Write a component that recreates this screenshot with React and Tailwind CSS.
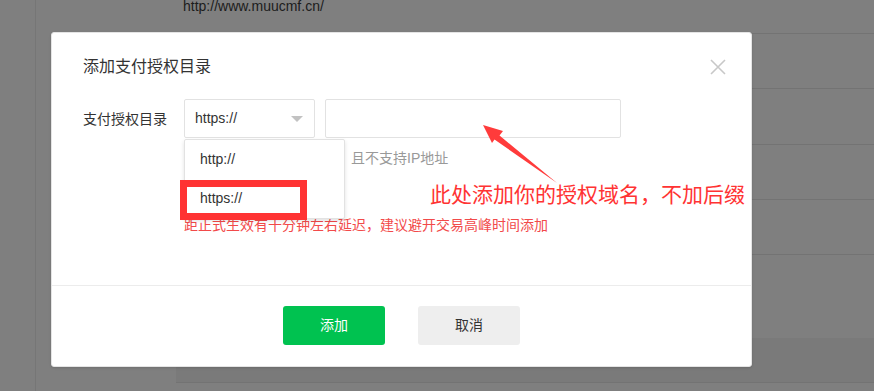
import React, { useState } from 'react';

const font = { fontFamily: '"Liberation Sans", "Noto Sans CJK SC", sans-serif' };

const Arrow = () => (
  // red annotation arrow pointing at the domain input
  <svg className="absolute left-0 top-0 z-20 pointer-events-none" width="874" height="391">
    <polygon
      points="483,125 503,131 499.5,135.5 557,183 494.5,139.5 492,143"
      fill="#ff3b3b"
    />
  </svg>
);

const App = () => {
  const [protocol, setProtocol] = useState('https://');
  const [open, setOpen] = useState(true);

  return (
    <div className="relative w-[874px] h-[391px] overflow-hidden bg-[#7f7f7f]" style={font}>
      {/* page behind the mask */}
      <div className="flex h-full">
        <div className="w-[36px] border-r border-[#767676] shrink-0" />
        <div className="flex-1 flex flex-col pl-[140px]">
          <div className="h-[34px] border-b border-[#737373] text-[14px] leading-[12px] text-[#1c1c1c] pl-[7px]">
            http://www.muucmf.cn/
          </div>
          <div className="h-[55px] border-b border-[#737373]" />
          <div className="h-[56px] border-b border-[#737373]" />
          <div className="h-[55px] border-b border-[#737373]" />
          <div className="h-[55px] border-b border-[#737373]" />
          <div className="h-[83px]" />
          <div className="h-[45px] bg-[#7a7a7a] border-b border-[#737373]" />
        </div>
      </div>

      {/* modal */}
      <div className="absolute left-[51px] top-[32px] w-[701px] h-[335px] bg-white rounded-[3px] border border-[#e4e4e4] shadow-sm flex flex-col">
        <div className="flex items-start justify-between pl-[31px] pr-[25px] pt-[24px] h-[44px]">
          <div className="text-[16px] leading-[20px] text-[#333]">添加支付授权目录</div>
          <button className="mt-[2px] text-[#c8c8c8]">
            <svg width="16" height="16" viewBox="0 0 16 16" stroke="currentColor" strokeWidth="1.6" fill="none">
              <path d="M1 1 L15 15 M15 1 L1 15" />
            </svg>
          </button>
        </div>

        <div className="flex-1 pl-[31px] pt-[22px]">
          <div className="flex items-center">
            <div className="w-[101px] text-[14px] leading-[20px] text-[#333]">支付授权目录</div>
            <div className="relative">
              <div
                className="w-[131px] h-[39px] border border-[#e2e2e2] rounded-[2px] flex items-center justify-between pl-[10px] pr-[11px] cursor-pointer"
                onClick={() => setOpen(!open)}
              >
                <span className="text-[14px] text-[#333]">{protocol}</span>
                <span className="w-0 h-0 border-l-[6px] border-r-[6px] border-t-[6px] border-l-transparent border-r-transparent border-t-[#c2c2c2]" />
              </div>
              {open && (
                <div className="absolute left-0 top-[40px] z-10 w-[161px] h-[80px] bg-white border border-[#e2e2e2] rounded-[2px] shadow-[0_2px_4px_rgba(0,0,0,0.12)] flex flex-col">
                  {['http://', 'https://'].map((p) => (
                    <div
                      key={p}
                      className="h-[40px] flex items-center pl-[15px] text-[14px] text-[#333] cursor-pointer"
                      onClick={() => { setProtocol(p); setOpen(false); }}
                    >
                      {p}
                    </div>
                  ))}
                </div>
              )}
            </div>
            <input className="ml-[10px] w-[296px] h-[39px] border border-[#e2e2e2] rounded-[2px] outline-none px-[10px] text-[14px]" />
          </div>
          <div className="pl-[268px] mt-[10px] text-[14px] leading-[20px] text-[#999]">且不支持IP地址</div>
          <div className="pl-[101px] mt-[47px] text-[14px] leading-[20px] text-[#f24a4a]">距正式生效有十分钟左右延迟，建议避开交易高峰时间添加</div>
        </div>

        <div className="h-[81px] border-t border-[#ececec] flex justify-center items-start pt-[20px] gap-[33px]">
          <button className="w-[102px] h-[39px] rounded-[3px] bg-[#00c250] text-white text-[14px]">添加</button>
          <button className="w-[102px] h-[39px] rounded-[3px] bg-[#eeeeee] text-[#333] text-[14px]">取消</button>
        </div>
      </div>

      {/* annotations drawn over the screenshot */}
      <div className="absolute z-20 left-[180px] top-[180px] w-[127px] h-[40px] border-[7px] border-[#ff3333] pointer-events-none" />
      <Arrow />
      <div className="absolute z-20 left-[430px] top-[181px] text-[21px] leading-[28px] text-[#ff3333] whitespace-nowrap pointer-events-none">
        此处添加你的授权域名，不加后缀
      </div>
    </div>
  );
};

export default App;
